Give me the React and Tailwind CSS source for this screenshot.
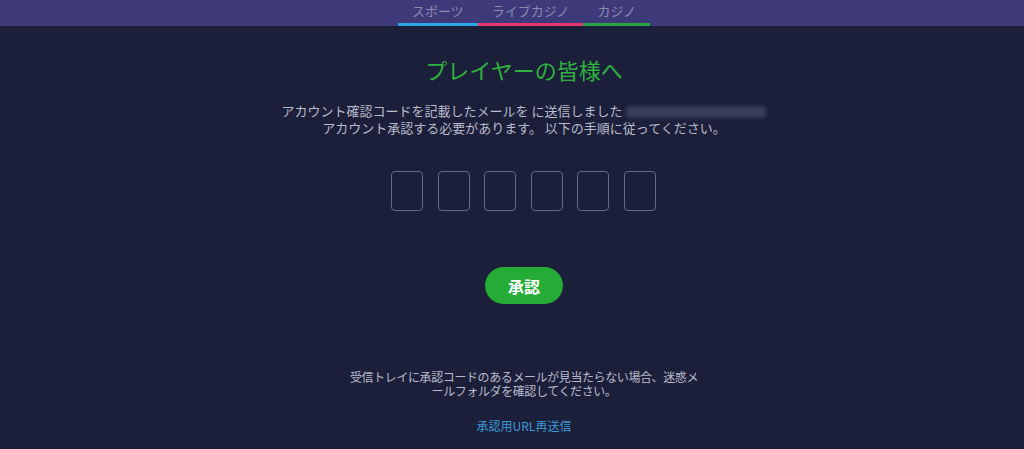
export default function App() {
  const tabs = [
    { label: 'スポーツ', line: 'border-[#2fa6e6]' },
    { label: 'ライブカジノ', line: 'border-[#e83470]' },
    { label: 'カジノ', line: 'border-[#27a444]' },
  ];

  return (
    <div className="min-h-[449px] w-full bg-[#1c1f3a] font-['Noto_Sans_CJK_JP','Noto_Sans',sans-serif]">
      {/* top tabs */}
      <div className="h-[26px] bg-[#3e3a7a] flex justify-center pl-6">
        {tabs.map((t) => (
          <div
            key={t.label}
            className={`px-[14px] h-[26px] border-b-[3px] ${t.line} text-[13px] leading-[22px] text-[#8d8aad]`}
          >
            {t.label}
          </div>
        ))}
      </div>

      <div className="flex flex-col items-center pl-6">
        <h1 className="mt-[28px] text-[22px] leading-[30px] text-[#2fb13f]">プレイヤーの皆様へ</h1>

        <p className="mt-[18px] text-center text-[13px] leading-[17px] text-[#b9bccb]">
          アカウント確認コードを記載したメールを に送信しました
          <span className="inline-block align-middle ml-1 w-[140px] h-[12px] rounded bg-[#3a3e5c] blur-[2px]" />
          <br />
          アカウント承認する必要があります。 以下の手順に従ってください。
        </p>

        <div className="mt-[35px] flex gap-[14.5px] -ml-[1px]">
          {[0, 1, 2, 3, 4, 5].map((i) => (
            <div key={i} className="w-[32px] h-[40px] rounded-[4px] border border-[#656a85]" />
          ))}
        </div>

        <button className="mt-[56px] w-[78px] h-[37px] rounded-full bg-[#24ac37] text-white text-[16px] font-bold">
          承認
        </button>

        <p className="mt-[66px] w-[359px] text-center text-[12px] leading-[14px] tracking-[-0.4px] [line-break:anywhere] text-[#b9bccb]">
          受信トレイに承認コードのあるメールが見当たらない場合、迷惑メールフォルダを確認してください。
        </p>

        <a className="mt-[21px] text-[12px] leading-[14px] text-[#3b9bd8]">承認用URL再送信</a>
      </div>
    </div>
  );
}
